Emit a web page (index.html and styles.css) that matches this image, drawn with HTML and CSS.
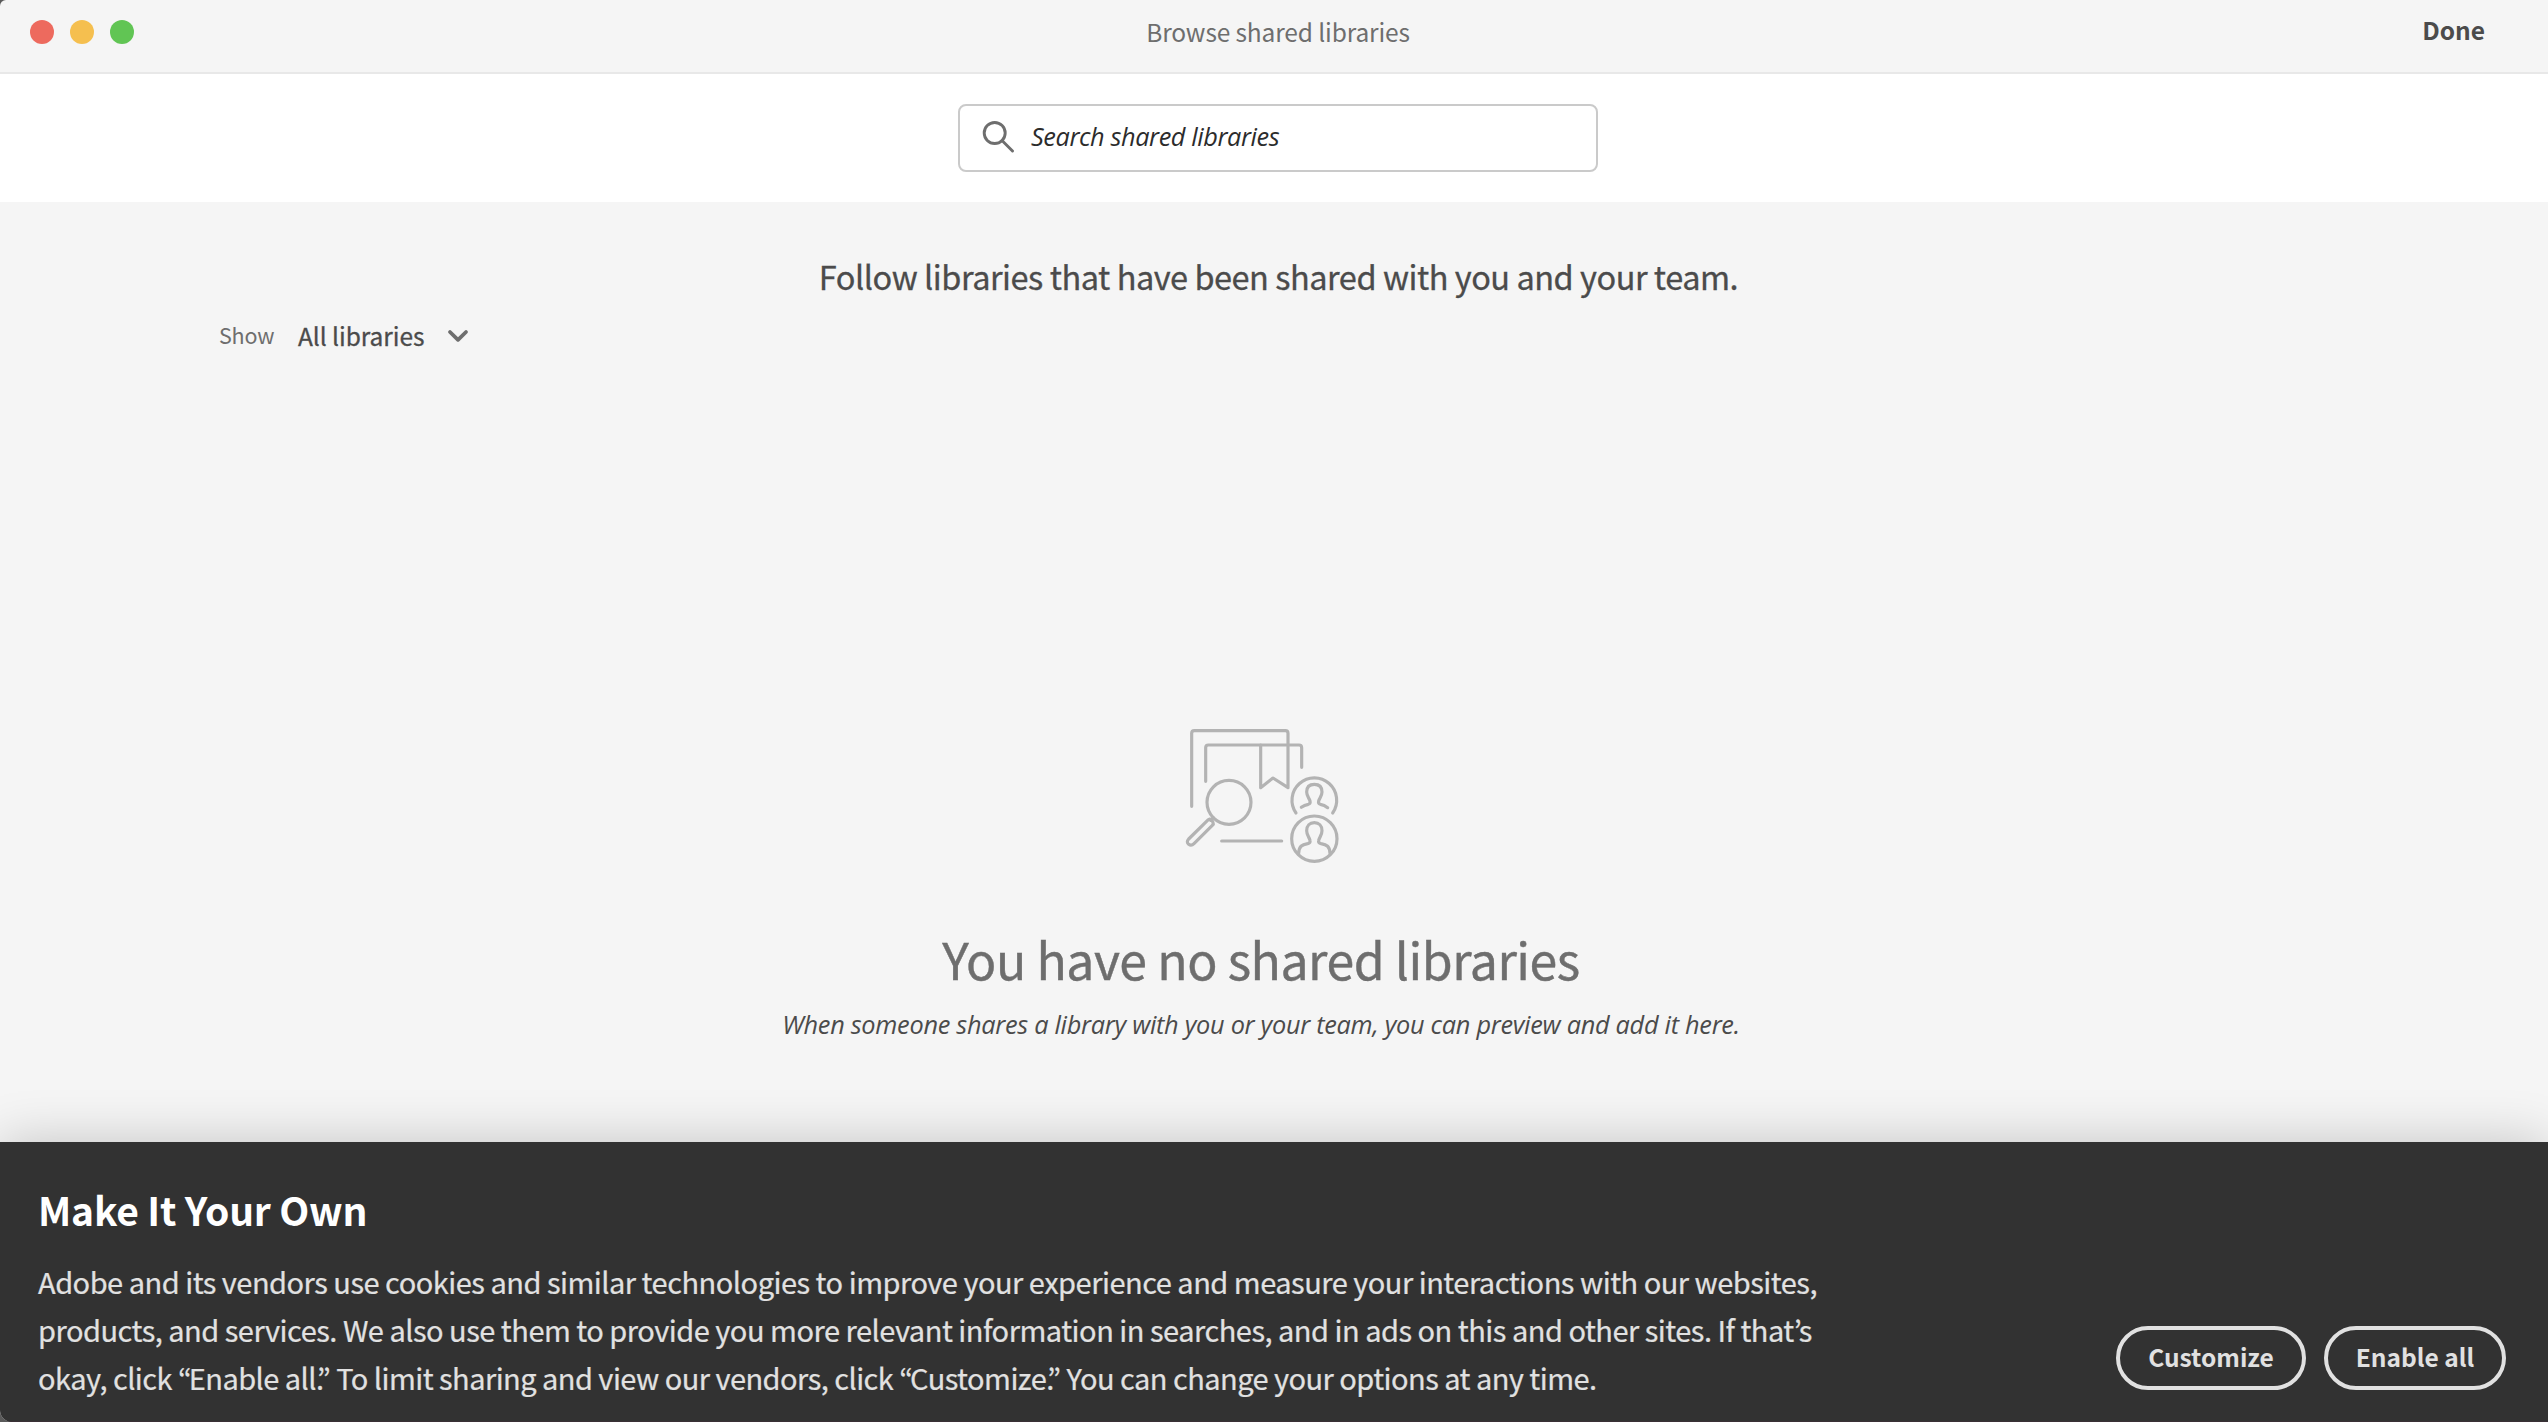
FILE: index.html
```html
<!DOCTYPE html>
<html lang="en">
<head>
<meta charset="utf-8">
<title>Browse shared libraries</title>
<link rel="stylesheet" href="styles.css">
</head>
<body>
<div class="window">
  <header class="titlebar">
    <div class="lights">
      <span class="light light-close"></span>
      <span class="light light-minimize"></span>
      <span class="light light-zoom"></span>
    </div>
    <h1 class="window-title">Browse shared libraries</h1>
    <a class="done">Done</a>
  </header>

  <div class="search-bar">
    <div class="search-field">
      <svg class="search-icon" viewBox="0 0 33 33" fill="none" stroke="#6e6e6e" stroke-width="2.9">
        <circle cx="12.7" cy="13" r="10.5"/>
        <path d="M20 20.5 30.5 31" stroke-linecap="round"/>
      </svg>
      <span class="search-placeholder">Search shared libraries</span>
    </div>
  </div>

  <main class="content">
    <h2 class="intro">Follow libraries that have been shared with you and your team.</h2>
    <div class="filter">
      <span class="filter-label">Show</span>
      <span class="filter-value">All libraries</span>
      <svg class="chevron" viewBox="0 0 22 14" fill="none" stroke="#6e6e6e" stroke-width="3.8" stroke-linecap="round" stroke-linejoin="round">
        <path d="M3 3 11 10.8 19 3"/>
      </svg>
    </div>

    <section class="empty">
      <svg class="empty-art" viewBox="3 0 600 540" fill="none" stroke="#b3b3b3" stroke-width="9.5" stroke-linecap="round" stroke-linejoin="round">
        <path d="M95 319V100q0-8 8-8H376q8 0 8 8V263L339 234 302 263V135"/>
        <path d="M137 244V143q0-8 8-8H417q8 0 8 8V202"/>
        <circle cx="207" cy="307" r="66"/>
        <path d="M160 353 152 361M145 359 86 417Q78 426 86 433Q94 439 102 431L160 373L158 364L150 357Z"/>
        <path d="M185 423H365"/>
        <path d="M408 339A67 67 0 1 1 518 339"/>
        <path d="M424 322Q433 315 445 313Q452 311 450 303C448 295 440 289 440 276C440 261 449 253 463 253C477 253 486 261 486 276C486 289 478 295 476 303Q474 311 481 313Q493 315 503 323"/>
        <circle cx="463" cy="416" r="68"/>
        <path d="M416 460C417 439 425 434 443 431Q452 429 450 421C448 412 440 406 440 392C440 377 449 368 463 368C477 368 486 377 486 392C486 406 478 412 476 421Q474 429 483 431C501 434 509 439 510 460"/>
      </svg>
      <h3 class="empty-title">You have no shared libraries</h3>
      <p class="empty-text">When someone shares a library with you or your team, you can preview and add it here.</p>
    </section>
  </main>

  <footer class="cookies">
    <div class="cookies-copy">
      <h2 class="cookies-title">Make It Your Own</h2>
      <p class="cookies-text">Adobe and its vendors use cookies and similar technologies to improve your experience and measure your interactions with our websites,<br>products, and services. We also use them to provide you more relevant information in searches, and in ads on this and other sites. If that<span class="kern-quote">’</span>s<br><span class="last-line">okay, click <span class="kern-quote">“</span>Enable all<span class="kern-stop">.</span>” To limit sharing and view our vendors, click <span class="kern-quote">“</span>Customize<span class="kern-stop">.</span>” You can change your options at any time.</span></p>
    </div>
    <div class="cookies-actions">
      <button class="pill pill-customize">Customize</button>
      <button class="pill pill-enable">Enable all</button>
    </div>
  </footer>
</div>
</body>
</html>
```
FILE: styles.css
```css
* { box-sizing: border-box; }

body {
  margin: 0;
  background: #5a5a5a;
  font-family: "Noto Sans CJK KR", "Noto Sans", sans-serif;
  color: #4b4b4b;
}

h1, h2, h3, p { margin: 0; font-weight: 400; white-space: nowrap; }
svg { display: block; flex: none; }

.window {
  display: flex;
  flex-direction: column;
  height: 1422px;
  overflow: hidden;
  background: #f5f5f5;
  border-radius: 6px 0 0 12px;
}

.titlebar {
  display: grid;
  grid-template-columns: 1fr auto 1fr;
  height: 74px;
  padding: 0 22px 0 30px;
  border-bottom: 2px solid #e8e8e8;
}
.lights { display: flex; gap: 16px; padding-top: 20px; }
.light { width: 24px; height: 24px; border-radius: 50%; }
.light-close { background: #ed6a5e; }
.light-minimize { background: #f5bf4f; }
.light-zoom { background: #61c554; }
.window-title {
  padding-top: 12px;
  font-size: 24.5px;
  line-height: 40px;
  letter-spacing: -0.13px;
  color: #6e6e6e;
}
.done {
  justify-self: end;
  margin-right: 41px;
  padding-top: 10px;
  font-size: 24.5px;
  font-weight: 700;
  line-height: 40px;
}

.search-bar {
  display: flex;
  justify-content: center;
  height: 128px;
  padding: 30px 0 0 8px;
  background: #fff;
}
.search-field {
  display: flex;
  align-items: center;
  gap: 16px;
  width: 640px;
  height: 68px;
  padding: 0 22px 4px;
  border: 2px solid #cacaca;
  border-radius: 8px;
}
.search-icon { width: 33px; height: 33px; }
.search-placeholder {
  font: italic 400 25.3px/36px "Open Sans", sans-serif;
  letter-spacing: -0.4px;
  color: #2c2c2c;
}

.content { flex: 1; padding-top: 54px; }
.intro {
  padding-left: 9px;
  text-align: center;
  font-size: 32.5px;
  line-height: 40px;
  letter-spacing: -0.47px;
  -webkit-text-stroke: 0.3px;
}
.filter {
  display: flex;
  align-items: center;
  height: 40px;
  margin-top: 19px;
  padding-left: 219px;
}
.filter-label { width: 79px; padding-bottom: 1px; font-size: 21.5px; letter-spacing: -0.2px; color: #6e6e6e; }
.filter-value { width: 149px; font-size: 24.5px; letter-spacing: -0.05px; -webkit-text-stroke: 0.3px; }
.chevron { width: 22px; height: 14px; margin-top: 2px; }

.empty {
  display: flex;
  flex-direction: column;
  align-items: center;
  margin-top: 345px;
  padding-right: 26px;
}
.empty-art { width: 200px; height: 180px; }
.empty-title {
  margin-top: 48px;
  font-size: 50px;
  line-height: 60px;
  letter-spacing: -0.5px;
  -webkit-text-stroke: 0.4px;
  color: #6e6e6e;
}
.empty-text {
  margin-top: 18px;
  font: italic 400 25.3px/36px "Open Sans", sans-serif;
  letter-spacing: -0.28px;
}

.cookies {
  display: flex;
  justify-content: space-between;
  align-items: flex-end;
  height: 280px;
  padding: 0 42px 31px 38px;
  background: #323232;
  border-bottom: 1px solid #3a3036;
  box-shadow: 0 0 50px rgba(0, 0, 0, 0.2);
}
.cookies-copy { align-self: flex-start; padding-top: 43px; }
.cookies-title {
  font-size: 39px;
  font-weight: 700;
  line-height: 48px;
  letter-spacing: -0.2px;
  color: #fff;
}
.cookies-text {
  margin-top: 24px;
  font-size: 29px;
  line-height: 48px;
  letter-spacing: -0.5px;
  -webkit-text-stroke: 0.2px;
  color: #e1e1e1;
}
.last-line { letter-spacing: -0.54px; }
.kern-quote { letter-spacing: -3px; }
.kern-stop { letter-spacing: -7px; }
.cookies-actions { display: flex; gap: 18px; }
.pill {
  height: 64px;
  padding: 0 0 2px;
  border: 4px solid #e1e1e1;
  border-radius: 32px;
  background: none;
  font: 700 24.5px/50px "Noto Sans CJK KR", "Noto Sans", sans-serif;
  color: #e1e1e1;
}
.pill-customize { width: 190px; }
.pill-enable { width: 182px; }
```
